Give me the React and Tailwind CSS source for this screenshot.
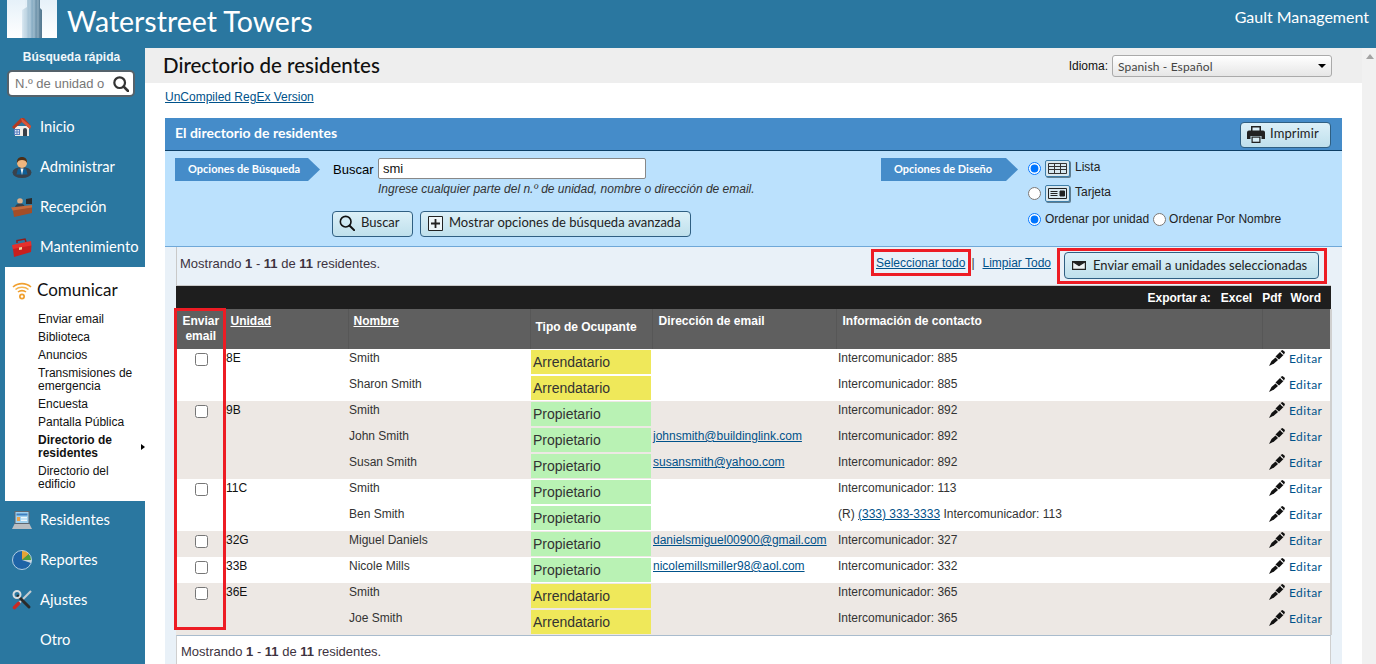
import React from 'react';

const lato = "[font-family:Lato,sans-serif]";

const HouseIcon = () => (
  <svg width="20" height="20" viewBox="0 0 20 20">
    <path d="M3 9h14v10H3z" fill="#f0eee8" />
    <path d="M0 10 9 1l3 0 7 8-1 3-8-7-8 7z" fill="#b23a22" />
    <path d="M9 1l10 8-1 3-8-7z" fill="#d9583a" />
    <path d="M11 19v-6a2 2 0 0 1 4 0v6z" fill="#39414a" />
    <path d="M2 12h6v6H2z" fill="#5a7fbe" />
    <path d="M3 13h1.5v1.5H3zM5.5 13H7v1.5H5.5zM3 15.5h1.5V17H3zM5.5 15.5H7V17H5.5z" fill="#dfe9f7" />
  </svg>
);

const PersonIcon = () => (
  <svg width="20" height="22" viewBox="0 0 20 22">
    <ellipse cx="10" cy="16.5" rx="9.5" ry="5.5" fill="#39424c" />
    <path d="M6 12.5h8l1.5 6H4.500z" fill="#0f5f96" />
    <path d="M8.500 12.500h3L10 19z" fill="#eef3f6" />
    <circle cx="10" cy="7" r="5" fill="#efb67f" />
    <path d="M5 7c-.5-4 2-6 5-6s5.500 2 5 6c-1-2-2-3-5-3S6 5 5 7z" fill="#4d2f16" />
  </svg>
);

const DeskIcon = () => (
  <svg width="22" height="20" viewBox="0 0 22 20">
    <circle cx="9" cy="4" r="2.800" fill="#dcb08a" />
    <path d="M4 11c0-3 2-4.500 5-4.500s5 1.500 5 4.500z" fill="#3b424a" />
    <path d="M15 2l6-1v6h-6z" fill="#2b2b2b" />
    <path d="M0 10.500 21 8v3L2 14z" fill="#c56a3c" />
    <path d="M2 13.500 21 10.500V16L3 20z" fill="#a34e28" />
  </svg>
);

const ToolboxIcon = () => (
  <svg width="21" height="19" viewBox="0 0 21 19">
    <path d="M6 5V2.500L14 1l1 3" fill="none" stroke="#8d1c1c" strokeWidth="1.500" />
    <path d="M1 7 20 3l.5 5L2 12z" fill="#e5302c" />
    <path d="M2 11 20.500 7.500 20 14 3 19z" fill="#c81f1e" />
    <path d="M8 9.500l3-.6v2.500l-3 .6z" fill="#f2d9a0" />
  </svg>
);

const WifiIcon = () => (
  <svg width="20" height="19" viewBox="0 0 20 19" fill="none">
    <path d="M1 6c5-4.500 13-4.500 18 0" stroke="#f0a030" strokeWidth="1.600" />
    <path d="M3.500 8.500c3.500-3 9.500-3 13 0" stroke="#f4b450" strokeWidth="1.600" />
    <path d="M6 11c2.200-1.800 5.800-1.800 8 0" stroke="#f0a030" strokeWidth="1.600" />
    <circle cx="10" cy="15.500" r="3" fill="#f0a030" />
    <circle cx="10" cy="15.500" r="1.200" fill="#fff" />
  </svg>
);

const LaptopIcon = () => (
  <svg width="20" height="18" viewBox="0 0 20 18">
    <path d="M2.500 0h15v13h-15z" fill="#5f6770" />
    <path d="M3.500 1h13v11h-13z" fill="#9fd0ee" />
    <path d="M4.500 2.500h11v2h-11z" fill="#3d7fc1" />
    <path d="M5 6h3v4H5z" fill="#e9a14c" />
    <path d="M9 6h6v1.500H9zM9 8.500h6V10H9z" fill="#eef6fb" />
    <path d="M2.500 13h15L20 18H0z" fill="#b9bdc1" />
  </svg>
);

const PieIcon = () => (
  <svg width="20" height="20" viewBox="0 0 20 20">
    <circle cx="10" cy="10" r="9.500" fill="#1e63a6" />
    <path d="M10 10V.5a9.500 9.500 0 0 1 7 3.500z" fill="#e3a435" />
    <path d="M10 10l7-6a9.500 9.500 0 0 1 2.500 6z" fill="#4f9e3a" />
    <path d="M10 10h9.500a9.500 9.500 0 0 1-.5 3z" fill="#c9d3da" />
    <circle cx="10" cy="10" r="9.500" fill="none" stroke="#d7e6f1" strokeWidth=".8" />
  </svg>
);

const ToolsIcon = () => (
  <svg width="20" height="20" viewBox="0 0 20 20" fill="none">
    <path d="M19 1 3 17" stroke="#c6ccd1" strokeWidth="2.200" />
    <path d="M6.500 13.500 2.500 17.500" stroke="#c92a25" strokeWidth="3.600" strokeLinecap="round" />
    <path d="M6 6l11 11" stroke="#2a2a2a" strokeWidth="3" strokeLinecap="round" />
    <circle cx="5" cy="4.500" r="3.500" stroke="#d8dde0" strokeWidth="2" />
  </svg>
);

const PenIcon = () => (
  <svg width="16" height="16" viewBox="0 0 16 16" className="shrink-0">
    <path d="M0 16l2.500-5 4-3.500 2.500 2.500-4 3.500z" fill="#111" />
    <path d="M6.500 6.500 11 2l3.500 3-4.500 4.500z" fill="#111" />
    <path d="M11.500 1 13.500 0 16 2l-1 2.500z" fill="#111" />
    <path d="M11.800 2.600l2.200 1.800" stroke="#fff" strokeWidth=".8" />
  </svg>
);

const SearchGlyph = ({ size = 18, color = '#222', width = 2.500 }) => (
  <svg width={size} height={size} viewBox="0 0 18 18" fill="none">
    <circle cx="7.500" cy="7.500" r="6" stroke={color} strokeWidth={width} />
    <path d="M12 12l5 5" stroke={color} strokeWidth={width + 0.500} strokeLinecap="round" />
  </svg>
);

const PrintIcon = () => (
  <svg width="18" height="17" viewBox="0 0 18 17">
    <path d="M4 0h10v5H4z" fill="#222" />
    <path d="M5.500 1.500h7V5h-7z" fill="#dbeef6" />
    <path d="M2 4.500h14a2 2 0 0 1 2 2V13h-3.500v-3h-11v3H0V6.500a2 2 0 0 1 2-2z" fill="#222" />
    <path d="M4.500 10.500h9V17h-9z" fill="#222" />
    <path d="M5.700 11.700h6.600v4H5.700z" fill="#dbeef6" />
  </svg>
);

const ListViewIcon = () => (
  <div className="flex h-[17px] w-[25px] items-center justify-center rounded-[2px] border border-[#3f7ea8] bg-[#d8e8f0] shadow-[1px_1px_0_#607d8f]">
    <svg width="19" height="11" viewBox="0 0 19 11" fill="none" stroke="#333">
      <path d="M.5.5h18v10H.5zM.5 3.500h18M.5 6.500h18M6.500.5v10M12.500.5v10" />
    </svg>
  </div>
);

const CardViewIcon = () => (
  <div className="flex h-[17px] w-[25px] items-center justify-center rounded-[2px] border border-[#3f7ea8] bg-[#d8e8f0] shadow-[1px_1px_0_#607d8f]">
    <svg width="19" height="11" viewBox="0 0 19 11" fill="none" stroke="#222">
      <path d="M.5.5h18v10H.5zM2.500 3.500h7M2.500 5.500h7M2.500 7.500h7" />
      <path d="M12 3h4.500v5H12z" fill="#222" />
    </svg>
  </div>
);

const navTop = [
  { label: 'Inicio', icon: <HouseIcon /> },
  { label: 'Administrar', icon: <PersonIcon /> },
  { label: 'Recepción', icon: <DeskIcon /> },
  { label: 'Mantenimiento', icon: <ToolboxIcon /> },
];

const navBottom = [
  { label: 'Residentes', icon: <LaptopIcon /> },
  { label: 'Reportes', icon: <PieIcon /> },
  { label: 'Ajustes', icon: <ToolsIcon /> },
  { label: 'Otro', icon: null },
];

const subItems = [
  'Enviar email',
  'Biblioteca',
  'Anuncios',
  'Transmisiones de emergencia',
  'Encuesta',
  'Pantalla Pública',
  'Directorio de residentes',
  'Directorio del edificio',
];

const rows = [
  { group: 0, first: true, unit: '8E', name: 'Smith', type: 'A', contact: 'Intercomunicador: 885' },
  { group: 0, name: 'Sharon Smith', type: 'A', contact: 'Intercomunicador: 885' },
  { group: 1, first: true, unit: '9B', name: 'Smith', type: 'P', contact: 'Intercomunicador: 892' },
  { group: 1, name: 'John Smith', type: 'P', email: 'johnsmith@buildinglink.com', contact: 'Intercomunicador: 892' },
  { group: 1, name: 'Susan Smith', type: 'P', email: 'susansmith@yahoo.com', contact: 'Intercomunicador: 892' },
  { group: 0, first: true, unit: '11C', name: 'Smith', type: 'P', contact: 'Intercomunicador: 113' },
  { group: 0, name: 'Ben Smith', type: 'P', phone: '(333) 333-3333', contact: 'Intercomunicador: 113' },
  { group: 1, first: true, unit: '32G', name: 'Miguel Daniels', type: 'P', email: 'danielsmiguel00900@gmail.com', contact: 'Intercomunicador: 327' },
  { group: 0, first: true, unit: '33B', name: 'Nicole Mills', type: 'P', email: 'nicolemillsmiller98@aol.com', contact: 'Intercomunicador: 332' },
  { group: 1, first: true, unit: '36E', name: 'Smith', type: 'A', contact: 'Intercomunicador: 365' },
  { group: 1, name: 'Joe Smith', type: 'A', contact: 'Intercomunicador: 365' },
];

const NavItem = ({ item }) => (
  <div className="flex h-[40px] items-center text-white">
    <div className="flex w-[40px] shrink-0 justify-center pl-[3px]">{item.icon}</div>
    <span className={`${lato} pb-[2px] text-[14.700px]`}>{item.label}</span>
  </div>
);

const Tag = ({ children, width }) => (
  <div
    className={`${lato} flex h-[23px] shrink-0 items-center bg-[#458cc9] pl-[13px] text-[11px] font-bold text-white [clip-path:polygon(0_0,calc(100%-12px)_0,100%_50%,calc(100%-12px)_100%,0_100%)] ${width}`}
  >
    {children}
  </div>
);

const ToolButton = ({ children, className = '' }) => (
  <button
    className={`${lato} flex items-center whitespace-nowrap rounded-[4px] border border-[#2f5f82] bg-gradient-to-b from-[#dcf0f8] to-[#bfe0ec] text-[13px] text-[#222] ${className}`}
  >
    {children}
  </button>
);

const Summary = () => (
  <>
    Mostrando <b>1</b> - <b>11</b> de <b>11</b> residentes.
  </>
);

export default function App() {
  return (
    <div className="relative h-[664px] w-[1376px] overflow-hidden bg-white text-[12px] [font-family:'Liberation_Sans',Arial,sans-serif]">
      {/* Top bar */}
      <header className="flex h-[48px] items-start bg-[#2a77a0] pl-[7px] pr-[7px] text-white">
        <svg width="50" height="38" viewBox="0 0 50 38" className="shrink-0">
          <defs>
            <linearGradient id="sky" x1="0" y1="0" x2="0" y2="1">
              <stop offset="0" stopColor="#e6f1f9" />
              <stop offset="1" stopColor="#ffffff" />
            </linearGradient>
            <linearGradient id="tower" x1="0" y1="0" x2="1" y2="0">
              <stop offset="0" stopColor="#dbe9f2" />
              <stop offset=".5" stopColor="#8fb2c8" />
              <stop offset="1" stopColor="#54788f" />
            </linearGradient>
          </defs>
          <rect width="50" height="38" fill="url(#sky)" />
          <path d="M20 0h13v8l2 2v28H15V10l5-3z" fill="url(#tower)" />
          <path d="M19 0v38M23 0v38M27 0v38M31 0v38" stroke="#d7e6ef" strokeWidth=".7" opacity=".6" />
        </svg>
        <div className={`${lato} ml-[10px] mt-[3px] text-[28.500px] leading-[36px]`}>Waterstreet Towers</div>
        <div className={`${lato} ml-auto mt-[7px] text-[16px] leading-[20px]`}>Gault Management</div>
      </header>

      <div className="flex h-[616px]">
        {/* Sidebar */}
        <aside className="w-[145px] shrink-0 bg-[#2a77a0]">
          <div className="pr-[2px] pt-[2px] text-center text-[12px] font-bold leading-[14px] text-[#f0f6fa]">Búsqueda rápida</div>
          <div className="mx-[7px] mt-[6px] flex h-[27px] w-[128px] items-center justify-between rounded-[5px] border-2 border-[#55626b] bg-white pl-[6px] pr-[4px]">
            <span className="text-[13px] text-[#777]">N.º de unidad o</span>
            <SearchGlyph size={16} color="#333" />
          </div>
          <div className="mt-[10px]">
            {navTop.map((item) => (
              <NavItem key={item.label} item={item} />
            ))}
          </div>
          <div className="ml-[5px] h-[234px] bg-white">
            <div className="flex h-[43px] items-end pb-[10px]">
              <div className="flex w-[32px] justify-end pr-[5px]"><WifiIcon /></div>
              <span className={`${lato} text-[17px] leading-[20px] text-[#111]`}>Comunicar</span>
            </div>
            <ul className="pl-[33px] text-[12px] leading-[13px] text-[#111]">
              {subItems.map((label) => (
                <li key={label} className={`relative py-[2.500px] pr-[4px] ${label === 'Directorio de residentes' ? 'font-bold' : ''}`}>
                  {label}
                  {label === 'Directorio de residentes' && (
                    <span className="absolute right-0 top-[13px] h-0 w-0 border-y-[3.500px] border-l-[4px] border-y-transparent border-l-black" />
                  )}
                </li>
              ))}
            </ul>
          </div>
          <div className="mt-[-1px]">
            {navBottom.map((item) => (
              <NavItem key={item.label} item={item} />
            ))}
          </div>
        </aside>

        {/* Main */}
        <main className="flex min-w-0 flex-1">
          <div className="w-[1217px] shrink-0">
            <div className="flex h-[35px] items-center justify-between bg-[#eeeeee] pl-[18px] pr-[30px]">
              <h1 className={`${lato} pb-[2px] text-[20.500px] font-medium leading-[28px] text-[#111]`}>Directorio de residentes</h1>
              <div className="flex items-center gap-[4px]">
                <span className="text-[12px] text-[#111]">Idioma:</span>
                <div className={`${lato} flex h-[22px] w-[220px] items-center justify-between rounded-[3px] border border-[#aaa] bg-gradient-to-b from-white to-[#e6e6e6] pl-[5px] pr-[5px] text-[12px] tracking-[0.15px] text-[#444]`}>
                  <span className="pt-[2px]">Spanish - Español</span>
                  <span className="h-0 w-0 border-x-[4px] border-t-[4px] border-x-transparent border-t-black" />
                </div>
              </div>
            </div>

            <div className="px-[20px]">
              <div className="pt-[7px] leading-[15px]">
                <a className="text-[#00528a] underline">UnCompiled RegEx Version</a>
              </div>

              <section className="mt-[13px]">
                <div className="flex h-[33px] items-start justify-between border-b border-[#0d3f66] bg-[#458cc9] pl-[10px] pr-[11px]">
                  <span className={`${lato} mt-[7px] text-[14px] font-bold leading-[16px] text-white`}>El directorio de residentes</span>
                  <ToolButton className="mt-[4px] h-[26px] w-[91px] gap-[5px] pb-[2px] pl-[6px] tracking-[0.1px]">
                    <PrintIcon /> Imprimir
                  </ToolButton>
                </div>

                {/* Search options */}
                <div className="flex h-[96px] border-b border-[#6fa8d8] bg-[#bbe1fd] pl-[10px] pt-[7px]">
                  <div className="flex w-[706px] shrink-0">
                    <Tag width="w-[145px]">Opciones de Búsqueda</Tag>
                    <div className="ml-[12px]">
                      <div className="flex items-center">
                        <span className="w-[46px] pl-[1px] pt-[2px] text-[13px] text-black">Buscar</span>
                        <input
                          readOnly
                          value="smi"
                          className="h-[21px] w-[268px] rounded-[2px] border border-[#888] bg-white px-[4px] text-[13px] text-[#111] outline-none"
                        />
                      </div>
                      <div className="ml-[46px] mt-[2px] text-[12px] italic leading-[15px] text-[#333]">
                        Ingrese cualquier parte del n.º de unidad, nombre o dirección de email.
                      </div>
                      <div className="mt-[14px] flex gap-[7px]">
                        <ToolButton className="h-[26px] w-[81px] gap-[6px] pb-[1px] pl-[6px]">
                          <SearchGlyph size={16} color="#111" width={1.800} /> Buscar
                        </ToolButton>
                        <ToolButton className="h-[26px] w-[271px] gap-[6px] pb-[1px] pl-[7px]">
                          <svg width="15" height="15" viewBox="0 0 15 15" fill="none" stroke="#222">
                            <path d="M.5.5h14v14H.5z" fill="#eef6f9" />
                            <path d="M7.500 3v9M3 7.500h9" strokeWidth="1.800" />
                          </svg>
                          Mostrar opciones de búsqueda avanzada
                        </ToolButton>
                      </div>
                    </div>
                  </div>
                  <div className="flex">
                    <Tag width="w-[137px]">Opciones de Diseño</Tag>
                    <div className="ml-[10px] text-[12px] text-[#222]">
                      <div className="flex h-[18px] items-center gap-[4px] pt-[2px]">
                        <input type="radio" name="view" defaultChecked />
                        <ListViewIcon />
                        <span className="ml-[1px] pb-[2px]">Lista</span>
                      </div>
                      <div className="mt-[8px] flex h-[18px] items-center gap-[4px]">
                        <input type="radio" name="view" />
                        <CardViewIcon />
                        <span className="ml-[1px] pb-[2px]">Tarjeta</span>
                      </div>
                      <div className="mt-[8px] flex h-[18px] items-center gap-[4px]">
                        <input type="radio" name="order" defaultChecked />
                        <span>Ordenar por unidad</span>
                        <input type="radio" name="order" />
                        <span className="ml-[-1px]">Ordenar Por Nombre</span>
                      </div>
                    </div>
                  </div>
                </div>

                {/* Results */}
                <div className="bg-[#e9f1f8] px-[11px]">
                  <div className="flex h-[39px] items-start border-b border-l border-[#c9c9c9] pl-[3px] pr-[12px] pt-[9px]">
                    <span className="text-[13px] leading-[15px] text-[#3d3340]"><Summary /></span>
                    <a className="ml-auto leading-[15px] text-[#00528a] underline">Seleccionar todo</a>
                    <span className="ml-[6px] mr-[6px] leading-[15px] text-[#333]">|</span>
                    <a className="ml-[2px] leading-[15px] text-[#00528a] underline">Limpiar Todo</a>
                    <ToolButton className="ml-[13px] mt-[-4px] h-[27px] w-[255px] gap-[6px] pl-[7px]">
                      <svg width="14" height="9" viewBox="0 0 14 9" fill="none" stroke="#222" strokeWidth="1.200">
                        <path d="M.6.6h12.800v7.800H.6z" fill="#eef3f5" />
                        <path d="M.6.6 7 4.500 13.400.6z" fill="#222" />
                      </svg>
                      <span className="ml-[1px] tracking-[-0.01px]">Enviar email a unidades seleccionadas</span>
                    </ToolButton>
                  </div>

                  <div className="flex h-[23px] items-center justify-end gap-[10px] bg-[#1e1e1e] pr-[10px] font-bold text-white">
                    <span>Exportar a:</span>
                    <span>Excel</span>
                    <span>Pdf</span>
                    <span className="ml-[-1px]">Word</span>
                  </div>

                  <table className="w-[1155px] table-fixed border-collapse border-r-2 border-[#cfcfcf] bg-white">
                    <colgroup>
                      <col className="w-[48px]" />
                      <col className="w-[124px]" />
                      <col className="w-[182px]" />
                      <col className="w-[122px]" />
                      <col className="w-[184px]" />
                      <col className="w-[426px]" />
                      <col className="w-[69px]" />
                    </colgroup>
                    <thead>
                      <tr className="h-[40px] bg-[#5f5f5f] text-left align-top font-bold leading-[15px] text-white">
                        <th className="pl-[2px] pt-[5px] text-center">Enviar<br />email</th>
                        <th className="border-l border-[#575757] pl-[6px] pt-[5px]"><u>Unidad</u></th>
                        <th className="border-l border-[#575757] pl-[5px] pt-[5px]"><u>Nombre</u></th>
                        <th className="border-l border-[#575757] pl-[5px] pt-[11px]">Tipo de Ocupante</th>
                        <th className="border-l border-[#575757] pl-[6px] pt-[5px]">Dirección de email</th>
                        <th className="border-l border-[#575757] pl-[6px] pt-[5px]">Información de contacto</th>
                        <th className="border-l border-[#575757]" />
                      </tr>
                    </thead>
                    <tbody className="text-[#333]">
                      {rows.map((row, i) => (
                        <tr key={i} className={`h-[26px] align-top leading-[15px] ${row.group ? 'bg-[#ede8e4]' : 'bg-white'}`}>
                          <td className="pl-[2px] pt-[4px] text-center">
                            {row.first && <input type="checkbox" className="mx-auto block" />}
                          </td>
                          <td className="pl-[2px] pt-[2px] text-[#111]">{row.unit}</td>
                          <td className="pl-[1px] pt-[2px]">{row.name}</td>
                          <td className="px-[1px] py-[1px]">
                            <div className={`h-[24px] pl-[2px] text-[14px] leading-[24px] ${row.type === 'A' ? 'bg-[#efe85a]' : 'bg-[#b9f2b4]'}`}>
                              {row.type === 'A' ? 'Arrendatario' : 'Propietario'}
                            </div>
                          </td>
                          <td className="pl-[1px] pt-[2px]">
                            {row.email && <a className="text-[#00528a] underline">{row.email}</a>}
                          </td>
                          <td className="pl-[2px] pt-[2px]">
                            {row.phone && <>(R) <a className="text-[#00528a] underline">{row.phone}</a> </>}
                            {row.contact}
                          </td>
                          <td className="pl-[7px] pt-[1px]">
                            <div className="flex h-[16px] items-center gap-[4px]">
                              <PenIcon />
                              <span className={`${lato} text-[12px] leading-[15px] tracking-[0.4px] text-[#00528a]`}>Editar</span>
                            </div>
                          </td>
                        </tr>
                      ))}
                    </tbody>
                  </table>

                  <div className="h-[40px] border-x border-t border-x-[#cfcfcf] border-t-[#a9bccd] bg-white pl-[4px] pt-[8px] text-[13px] leading-[15px] text-[#3d3340]">
                    <Summary />
                  </div>
                </div>
              </section>
            </div>
          </div>

          {/* Scrollbar */}
          <div className="flex-1 bg-[#f1f1f1]">
            <div className="ml-[4px] mt-[6px] h-0 w-0 border-x-[4px] border-b-[5px] border-x-transparent border-b-[#a3a3a3]" />
          </div>
        </main>
      </div>

      {/* Red annotation boxes */}
      <div className="absolute left-[871px] top-[249px] h-[27px] w-[100px] border-[3px] border-[#ed1c24]" />
      <div className="absolute left-[1057px] top-[248px] h-[36px] w-[270px] border-[3px] border-[#ed1c24]" />
      <div className="absolute left-[174px] top-[308px] h-[322px] w-[52px] border-[3px] border-[#ed1c24]" />
    </div>
  );
}
